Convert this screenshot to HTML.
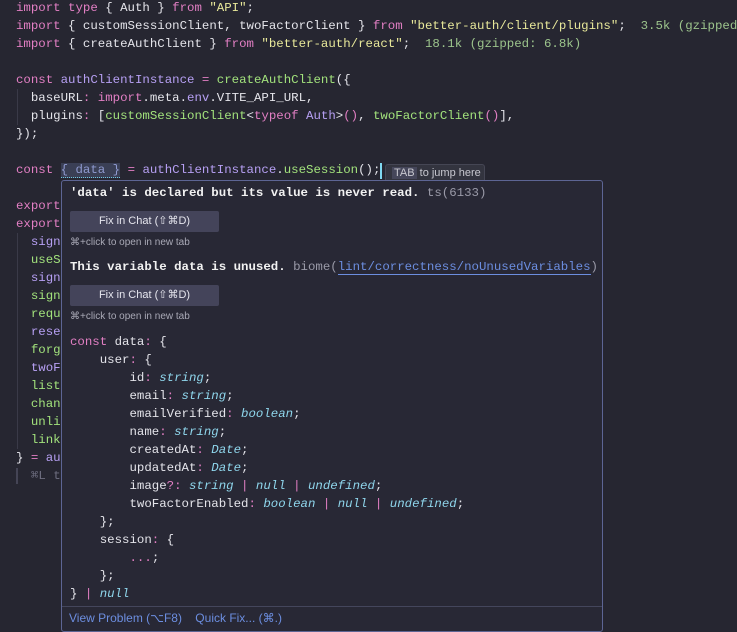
<!DOCTYPE html>
<html><head><meta charset="utf-8"><style>
*{margin:0;padding:0;box-sizing:border-box}
html,body{width:737px;height:632px;overflow:hidden}
body{background:#262631;position:relative;font-family:"Liberation Mono",monospace;font-size:12.4px;color:#e4e4ea}
.l{position:absolute;left:16px;right:0;overflow:hidden;height:18px;line-height:18px;white-space:pre}
.k{color:#e27fc4}.s{color:#e8e89a}.f{color:#a2e27c}.p{color:#b7a0f4}.c{color:#9cc48c}.g{color:#6e6e80}.t{color:#8fd6ec;font-style:italic}
.pop{position:absolute;left:61px;top:180px;width:542px;height:452px;background:#282835;border:1px solid #5d6594;border-radius:3px}
.pl{position:absolute;left:8px;height:18px;line-height:18px;white-space:pre}
.w{color:#f2f2f2;font-weight:bold}
.btn{position:absolute;left:8px;width:149px;height:21px;background:#44445a;border-radius:2px;color:#e6e6ee;font:11px "Liberation Sans",sans-serif;text-align:center;line-height:21px}
.sm{position:absolute;left:8px;font:10px "Liberation Sans",sans-serif;color:#a9a9b6}
.foot{position:absolute;left:0;right:0;bottom:0;height:25px;border-top:1px solid #44465c;font:12px "Liberation Sans",sans-serif;color:#6c8ee0;line-height:23px;padding-left:7px}
</style></head><body>
<div class="l" style="top:-1px"><span class="k">import type</span> { Auth } <span class="k">from</span> <span class="s">"API"</span>;</div>
<div class="l" style="top:17px"><span class="k">import</span> { customSessionClient, twoFactorClient } <span class="k">from</span> <span class="s">"better-auth/client/plugins"</span>;  <span class="c">3.5k (gzipped: 1.2k)</span></div>
<div class="l" style="top:35px"><span class="k">import</span> { createAuthClient } <span class="k">from</span> <span class="s">"better-auth/react"</span>;  <span class="c">18.1k (gzipped: 6.8k)</span></div>
<div class="l" style="top:71px"><span class="k">const</span> <span class="p">authClientInstance</span> <span class="k">=</span> <span class="f">createAuthClient</span>({</div>
<div class="l" style="top:89px">  baseURL<span class="k">:</span> <span class="k">import</span>.meta.<span class="p">env</span>.VITE_API_URL,</div>
<div class="l" style="top:107px">  plugins<span class="k">:</span> [<span class="f">customSessionClient</span>&lt;<span class="k">typeof</span> <span class="p">Auth</span>&gt;<span class="k">()</span>, <span class="f">twoFactorClient</span><span class="k">()</span>],</div>
<div class="l" style="top:125px">});</div>
<div style="position:absolute;left:17px;top:89px;width:1px;height:36px;background:#3a3a48"></div>
<div class="l" style="top:161px"><span class="k">const</span> <span style="background:#3a3f55;color:#8f9ad0;border-bottom:1px dotted #6fc6e0">{ data }</span> <span class="k">=</span> <span class="p">authClientInstance</span>.<span class="f">useSession</span>();</div>
<div style="position:absolute;left:380px;top:163px;width:2px;height:16px;background:#7fd8f0"></div>
<div style="position:absolute;left:385px;top:164px;width:100px;height:18px;background:#33343f;border:1px solid #454654;border-radius:3px 3px 0 0;font:11px 'Liberation Sans',sans-serif;color:#c8c8d0;line-height:16px;padding-left:6px"><span style="background:#45465a;padding:0 2px">TAB</span> to jump here</div>
<div class="l" style="top:197px"><span class="k">export</span></div>
<div class="l" style="top:215px"><span class="k">export</span></div>
<div class="l" style="top:233px">  <span class="p">sign</span></div>
<div class="l" style="top:251px">  <span class="f">useS</span></div>
<div class="l" style="top:269px">  <span class="p">sign</span></div>
<div class="l" style="top:287px">  <span class="f">sign</span></div>
<div class="l" style="top:305px">  <span class="f">requ</span></div>
<div class="l" style="top:323px">  <span class="p">rese</span></div>
<div class="l" style="top:341px">  <span class="f">forg</span></div>
<div class="l" style="top:359px">  <span class="p">twoF</span></div>
<div class="l" style="top:377px">  <span class="f">list</span></div>
<div class="l" style="top:395px">  <span class="f">chan</span></div>
<div class="l" style="top:413px">  <span class="f">unli</span></div>
<div class="l" style="top:431px">  <span class="f">link</span></div>
<div class="l" style="top:449px">} <span class="k">=</span> <span class="p">au</span></div>
<div class="l" style="top:467px">  <span class="g">⌘L to</span></div>
<div style="position:absolute;left:17px;top:233px;width:1px;height:216px;background:#3a3a48"></div>
<div style="position:absolute;left:16px;top:468px;width:2px;height:16px;background:#444455"></div>
<div class="pop">
<div class="pl w" style="top:3px">'data' is declared but its value is never read. <span style="color:#9a9aa8;font-weight:normal">ts(6133)</span></div>
<div class="btn" style="top:30px">Fix in Chat (⇧⌘D)</div>
<div class="sm" style="top:56px">⌘+click to open in new tab</div>
<div class="pl w" style="top:77px">This variable data is unused. <span style="color:#9a9aa8;font-weight:normal">biome(<span style="color:#6c8ee0;border-bottom:1px solid #6c8ee0">lint/correctness/noUnusedVariables</span>)</span></div>
<div class="btn" style="top:104px">Fix in Chat (⇧⌘D)</div>
<div class="sm" style="top:130px">⌘+click to open in new tab</div>
<div class="pl" style="top:152px"><span class="k">const</span> data<span class="k">:</span> {</div>
<div class="pl" style="top:170px">    user<span class="k">:</span> {</div>
<div class="pl" style="top:188px">        id<span class="k">:</span> <span class="t">string</span>;</div>
<div class="pl" style="top:206px">        email<span class="k">:</span> <span class="t">string</span>;</div>
<div class="pl" style="top:224px">        emailVerified<span class="k">:</span> <span class="t">boolean</span>;</div>
<div class="pl" style="top:242px">        name<span class="k">:</span> <span class="t">string</span>;</div>
<div class="pl" style="top:260px">        createdAt<span class="k">:</span> <span class="t">Date</span>;</div>
<div class="pl" style="top:278px">        updatedAt<span class="k">:</span> <span class="t">Date</span>;</div>
<div class="pl" style="top:296px">        image<span class="k">?:</span> <span class="t">string</span> <span class="k">|</span> <span class="t">null</span> <span class="k">|</span> <span class="t">undefined</span>;</div>
<div class="pl" style="top:314px">        twoFactorEnabled<span class="k">:</span> <span class="t">boolean</span> <span class="k">|</span> <span class="t">null</span> <span class="k">|</span> <span class="t">undefined</span>;</div>
<div class="pl" style="top:332px">    };</div>
<div class="pl" style="top:350px">    session<span class="k">:</span> {</div>
<div class="pl" style="top:368px">        <span class="k">...</span>;</div>
<div class="pl" style="top:386px">    };</div>
<div class="pl" style="top:404px">} <span class="k">|</span> <span class="t">null</span></div>
<div class="foot">View Problem (⌥F8) &nbsp;&nbsp;&nbsp;Quick Fix... (⌘.)</div>
</div>
</body></html>
